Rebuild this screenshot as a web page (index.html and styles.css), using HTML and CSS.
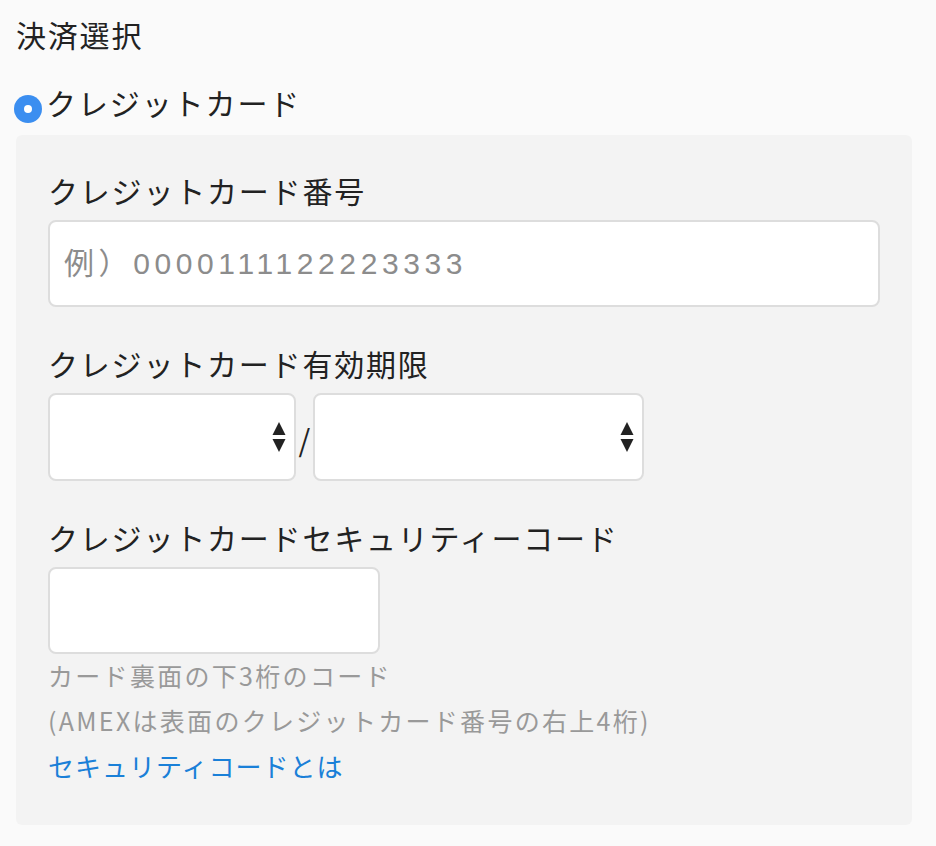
FILE: index.html
```html
<!DOCTYPE html>
<html lang="ja">

<head>
    <meta charset="UTF-8">
    <meta name="viewport" content="width=device-width, initial-scale=1.0">
    <title>決済選択</title>
    <link rel="stylesheet" href="styles.css">
</head>

<body>
    <div class="payment">
        <h2 class="title">決済選択</h2>
        <label class="method">
            <span class="radio"><span class="radio-dot"></span></span>
            <span>クレジットカード</span>
        </label>
        <div class="panel">
            <div class="field">
                <p class="label">クレジットカード番号</p>
                <input class="text-input wide" type="text" placeholder="例）0000111122223333">
            </div>
            <div class="field">
                <p class="label">クレジットカード有効期限</p>
                <div class="expire">
                    <div class="select-box month">
                        <select></select>
                        <svg class="arrows" width="14" height="30" viewBox="0 0 14 30">
                            <path d="M7 0 L13.5 13 L0.5 13 Z" fill="#222" />
                            <path d="M0.5 17 L13.5 17 L7 30 Z" fill="#222" />
                        </svg>
                    </div>
                    <span class="slash">/</span>
                    <div class="select-box year">
                        <select></select>
                        <svg class="arrows" width="14" height="30" viewBox="0 0 14 30">
                            <path d="M7 0 L13.5 13 L0.5 13 Z" fill="#222" />
                            <path d="M0.5 17 L13.5 17 L7 30 Z" fill="#222" />
                        </svg>
                    </div>
                </div>
            </div>
            <div class="field">
                <p class="label">クレジットカードセキュリティーコード</p>
                <input class="text-input short" type="text">
                <p class="hint first">カード裏面の下3桁のコード</p>
                <p class="hint">(AMEXは表面のクレジットカード番号の右上4桁)</p>
                <a class="link" href="#">セキュリティコードとは</a>
            </div>
        </div>
    </div>
</body>

</html>
```

FILE: styles.css
```css
* {
    margin: 0;
    padding: 0;
    box-sizing: border-box;
}

body {
    background-color: #fafafa;
    font-family: "Noto Sans CJK JP", "Noto Sans", sans-serif;
    color: #222;
}

.payment {
    width: 912px;
    padding: 12px 0 0 16px;
}

.title {
    font-size: 30px;
    font-weight: normal;
    line-height: 44px;
    letter-spacing: 1.8px;
}

.method {
    display: flex;
    align-items: center;
    margin-top: 24px;
    font-size: 30px;
    line-height: 44px;
    letter-spacing: 1.9px;
    margin-left: -2px;
}

.radio {
    display: flex;
    align-items: center;
    justify-content: center;
    width: 28px;
    height: 28px;
    border-radius: 50%;
    background-color: #3b8ef0;
    margin-right: 4px;
    margin-top: 14px;
}

.radio-dot {
    width: 8px;
    height: 8px;
    border-radius: 50%;
    background-color: #fff;
}

.panel {
    margin-top: 11px;
    background-color: #f3f3f3;
    border-radius: 6px;
    padding: 33px 30px 37px 32px;
}

.field+.field {
    margin-top: 34px;
}

.label {
    font-size: 30px;
    line-height: 44px;
    letter-spacing: 1.8px;
    margin-bottom: 8px;
}

.text-input {
    display: block;
    height: 87px;
    border: 2px solid #ddd;
    border-radius: 8px;
    background-color: #fff;
    font-family: "Liberation Sans", "Noto Sans CJK JP", sans-serif;
    font-size: 30px;
    letter-spacing: 4.6px;
    padding: 0 14px;
    color: #222;
    outline: none;
}

.text-input::placeholder {
    color: #8c8c8c;
}

.wide {
    width: 832px;
}

.short {
    width: 332px;
}

.expire {
    display: flex;
    align-items: center;
}

.select-box {
    position: relative;
    height: 88px;
}

.month {
    width: 248px;
}

.year {
    width: 331px;
}

.select-box select {
    width: 100%;
    height: 100%;
    appearance: none;
    -webkit-appearance: none;
    border: 2px solid #ddd;
    border-radius: 8px;
    background-color: #fff;
    outline: none;
}

.arrows {
    position: absolute;
    right: 10px;
    top: 29px;
}

.slash {
    width: 17px;
    text-align: center;
    font-size: 30px;
    line-height: 40px;
    margin-top: 4px;
}

.hint {
    font-size: 25px;
    line-height: 45px;
    letter-spacing: 2.3px;
    color: #999;
}

.hint.first {
    margin-top: -1px;
}

.link {
    display: block;
    font-size: 26px;
    line-height: 45px;
    letter-spacing: 1px;
    color: #1a80d8;
    text-decoration: none;
}
```
